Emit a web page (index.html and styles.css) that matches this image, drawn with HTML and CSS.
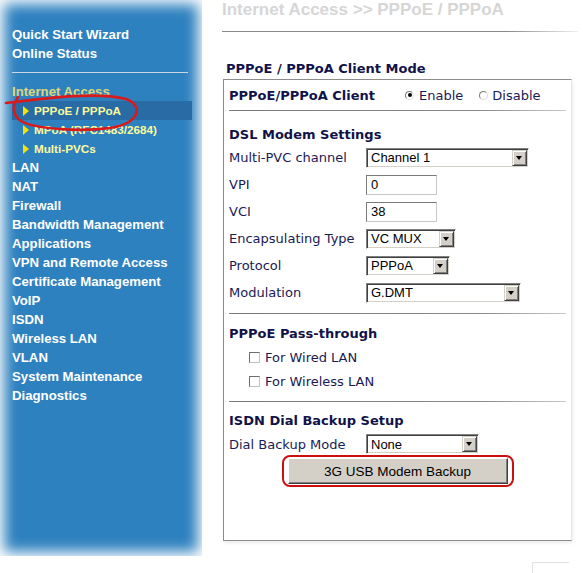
FILE: index.html
```html
<!DOCTYPE html>
<html lang="en">
<head>
    <meta charset="UTF-8">
    <meta name="viewport" content="width=device-width, initial-scale=1.0">
    <title>Internet Access - PPPoE / PPPoA</title>
    <link rel="stylesheet" href="styles.css">
</head>
<body>
<div class="page">

    <nav class="sidebar">
        <div class="menu-item">Quick Start Wizard</div>
        <div class="menu-item">Online Status</div>
        <div class="menu-sep"></div>
        <div class="menu-item menu-open">Internet Access</div>
        <div class="sub-item current"><span class="tri"></span>PPPoE / PPPoA</div>
        <div class="sub-item"><span class="tri"></span>MPoA (RFC1483/2684)</div>
        <div class="sub-item"><span class="tri"></span>Multi-PVCs</div>
        <div class="menu-item">LAN</div>
        <div class="menu-item">NAT</div>
        <div class="menu-item">Firewall</div>
        <div class="menu-item">Bandwidth Management</div>
        <div class="menu-item">Applications</div>
        <div class="menu-item">VPN and Remote Access</div>
        <div class="menu-item">Certificate Management</div>
        <div class="menu-item">VoIP</div>
        <div class="menu-item">ISDN</div>
        <div class="menu-item">Wireless LAN</div>
        <div class="menu-item">VLAN</div>
        <div class="menu-item">System Maintenance</div>
        <div class="menu-item">Diagnostics</div>

        <!-- hand drawn marker round the current page -->
        <svg class="scribble" width="202" height="150" viewBox="0 0 202 150">
            <path d="M6 103 C 40 99, 95 91, 126 99 C 143 105, 141 123, 110 128 C 80 132, 34 129, 21 121 C 11 114, 13 105, 18 97"
                  fill="none" stroke="#d81a1a" stroke-width="2.6" stroke-linecap="round"/>
        </svg>
    </nav>

    <main class="content">
        <h1 class="crumb">Internet Access &gt;&gt; PPPoE / PPPoA</h1>
        <div class="crumb-rule"></div>

        <h2 class="mode-title">PPPoE / PPPoA Client Mode</h2>

        <div class="panel">
            <div class="client-row">
                <span class="client-label">PPPoE/PPPoA Client</span>
                <span class="radio checked"></span><span class="opt">Enable</span>
                <span class="radio"></span><span class="opt">Disable</span>
            </div>
            <div class="sep"></div>

            <h3 class="section-title first">DSL Modem Settings</h3>
            <div class="fields">
                <div class="field">
                    <span>Multi-PVC channel</span>
                    <div class="select w163"><span>Channel 1</span><i class="drop"></i></div>
                </div>
                <div class="field">
                    <span>VPI</span>
                    <div class="textbox">0</div>
                </div>
                <div class="field">
                    <span>VCI</span>
                    <div class="textbox">38</div>
                </div>
                <div class="field">
                    <span>Encapsulating Type</span>
                    <div class="select w90"><span>VC MUX</span><i class="drop"></i></div>
                </div>
                <div class="field">
                    <span>Protocol</span>
                    <div class="select w84"><span>PPPoA</span><i class="drop"></i></div>
                </div>
                <div class="field">
                    <span>Modulation</span>
                    <div class="select w155"><span>G.DMT</span><i class="drop"></i></div>
                </div>
            </div>
            <div class="sep sep-mod"></div>

            <h3 class="section-title pass">PPPoE Pass-through</h3>
            <div class="check-row first-check"><span class="checkbox"></span>For Wired LAN</div>
            <div class="check-row"><span class="checkbox"></span>For Wireless LAN</div>
            <div class="sep sep-pass"></div>

            <h3 class="section-title isdn">ISDN Dial Backup Setup</h3>
            <div class="field dial">
                <span>Dial Backup Mode</span>
                <div class="select w113"><span>None</span><i class="drop"></i></div>
            </div>
            <div class="button-line">
                <div class="marked">
                    <button type="button" class="classic-btn">3G USB Modem Backup</button>
                </div>
            </div>
        </div>

        <div class="corner-box"></div>
    </main>

</div>
</body>
</html>
```

FILE: styles.css
```css
body {
    margin: 0;
    background-color: white;
    overflow: hidden;
}

.page {
    display: flex;
    width: 583px;
    height: 573px;
}

/* left menu */
.sidebar {
    position: relative;
    flex: none;
    width: 202px;
    height: 556px;
    box-sizing: border-box;
    padding: 25px 0 0 12px;
    background-color: #2e81bf;
    box-shadow: inset 0 0 14px 4px white;
    font: bold 13.2px/19px "Liberation Sans", Arial, sans-serif;
    color: white;
}

.menu-item {
    height: 19px;
    white-space: nowrap;
}

.menu-sep {
    width: 176px;
    height: 1px;
    margin: 9px 0 9px;
    background-color: #c9d6e3;
}

.menu-open {
    color: #dcd67c;
}

.sub-item {
    width: 169px;
    height: 19px;
    padding-left: 11px;
    font-size: 11.7px;
    color: #fbfb9c;
    white-space: nowrap;
}

.sub-item.current {
    background-color: #296ca5;
}

.tri {
    display: inline-block;
    width: 0;
    height: 0;
    margin-right: 5px;
    border-left: 6px solid #f4e200;
    border-top: 5px solid transparent;
    border-bottom: 5px solid transparent;
    vertical-align: -1px;
}

.scribble {
    position: absolute;
    left: 0;
    top: 0;
    pointer-events: none;
}

/* right side */
.content {
    flex: 1;
    padding-left: 20px;
    font-family: "DejaVu Sans", Verdana, sans-serif;
    font-size: 13px;
    color: #1a1a55;
}

.crumb {
    margin: 0;
    font: bold 17px/20px "Liberation Sans", Arial, sans-serif;
    color: #d6d6d6;
    white-space: nowrap;
}

.crumb-rule {
    width: 356px;
    height: 1px;
    margin-top: 11px;
    background: linear-gradient(to right, #8a8a8a, #8a8a8a 80%, #f0f0f0);
}

.mode-title {
    margin: 29px 0 2px 4px;
    font-size: 13px;
    line-height: 16px;
    color: #12124a;
}

.panel {
    width: 349px;
    height: 462px;
    box-sizing: border-box;
    margin-left: 1px;
    padding: 0 5px;
    border: 1px solid #8c8c8c;
    border-right-color: #e8e8e8;
    box-shadow: 1px 2px 3px rgba(0, 0, 0, 0.08);
}

.client-row {
    display: flex;
    align-items: center;
    height: 30px;
}

.client-label {
    width: 176px;
    font-weight: bold;
    color: #12124a;
}

.radio {
    position: relative;
    width: 9px;
    height: 9px;
    box-sizing: border-box;
    border: 1px solid #808080;
    border-color: #7a7a7a #e0e0e0 #e0e0e0 #7a7a7a;
    border-radius: 50%;
    background-color: white;
}

.radio.checked::after {
    content: "";
    position: absolute;
    left: 1.5px;
    top: 1.5px;
    width: 4px;
    height: 4px;
    border-radius: 50%;
    background-color: black;
}

.opt {
    margin: 0 16px 0 5px;
}

.opt:last-child {
    margin-left: 4px;
}

.sep {
    height: 1px;
    background: linear-gradient(to right, #777, #8a8a8a 75%, #c8c8c8);
}

.section-title {
    margin: 0;
    font-size: 13px;
    line-height: 16px;
    color: #12124a;
}

.section-title.first {
    margin-top: 16px;
}

.fields {
    margin-top: 1px;
}

.field {
    display: flex;
    align-items: center;
    height: 27px;
}

.field > span {
    width: 137px;
    flex: none;
}

.select {
    display: flex;
    align-items: center;
    justify-content: space-between;
    height: 20px;
    box-sizing: border-box;
    border: 1px solid;
    border-color: #808080 white white #808080;
    box-shadow: inset 1px 1px 0 #404040, inset -1px -1px 0 #d4d0c8;
    padding: 1px 2px 1px 4px;
    background-color: white;
    font: 13px "Liberation Sans", Arial, sans-serif;
    color: black;
}

.w163 { width: 163px; }
.w90 { width: 90px; }
.w84 { width: 84px; }
.w155 { width: 155px; }
.w113 { width: 113px; }

.drop {
    position: relative;
    width: 15px;
    height: 16px;
    box-sizing: border-box;
    margin-right: -1px;
    background-color: #d4d0c8;
    border: 1px solid;
    border-color: #d4d0c8 #404040 #404040 #d4d0c8;
    box-shadow: inset 1px 1px 0 white, inset -1px -1px 0 #808080;
}

.drop::after {
    content: "";
    position: absolute;
    left: 3px;
    top: 5px;
    border-top: 4px solid black;
    border-left: 3.5px solid transparent;
    border-right: 3.5px solid transparent;
}

.textbox {
    width: 71px;
    height: 20px;
    box-sizing: border-box;
    padding: 1px 4px;
    border: 1px solid;
    border-color: #7a7a7a #c8c8c8 #c8c8c8 #7a7a7a;
    font: 13px/16px "Liberation Sans", Arial, sans-serif;
    color: black;
}

.sep-mod {
    margin-top: 7px;
}

.section-title.pass {
    margin-top: 12px;
}

.check-row {
    display: flex;
    align-items: center;
    height: 24px;
    padding-left: 20px;
}

.first-check {
    margin-top: 3px;
}

.checkbox {
    width: 11px;
    height: 11px;
    box-sizing: border-box;
    margin-right: 5px;
    border: 1px solid;
    border-color: #6e6e6e #c0c0c0 #c0c0c0 #6e6e6e;
    background-color: white;
}

.sep-pass {
    margin-top: 8px;
}

.section-title.isdn {
    margin-top: 11px;
}

.field.dial {
    height: 22px;
    margin-top: 4px;
}

.button-line {
    display: flex;
    justify-content: center;
}

.marked {
    padding: 1px 4px;
    border: 2px solid #cc1010;
    border-radius: 8px;
}

.classic-btn {
    display: block;
    width: 220px;
    height: 26px;
    margin: 0;
    padding: 0;
    background-color: #d4d0c8;
    border: 1px solid;
    border-color: white #404040 #404040 white;
    box-shadow: inset -1px -1px 0 #808080;
    font: 13.5px "Liberation Sans", Arial, sans-serif;
    color: black;
}

.corner-box {
    width: 36px;
    height: 12px;
    margin: 21px 0 0 310px;
    border-top: 1px solid #e2e2e2;
    border-left: 1px solid #e2e2e2;
}
```
